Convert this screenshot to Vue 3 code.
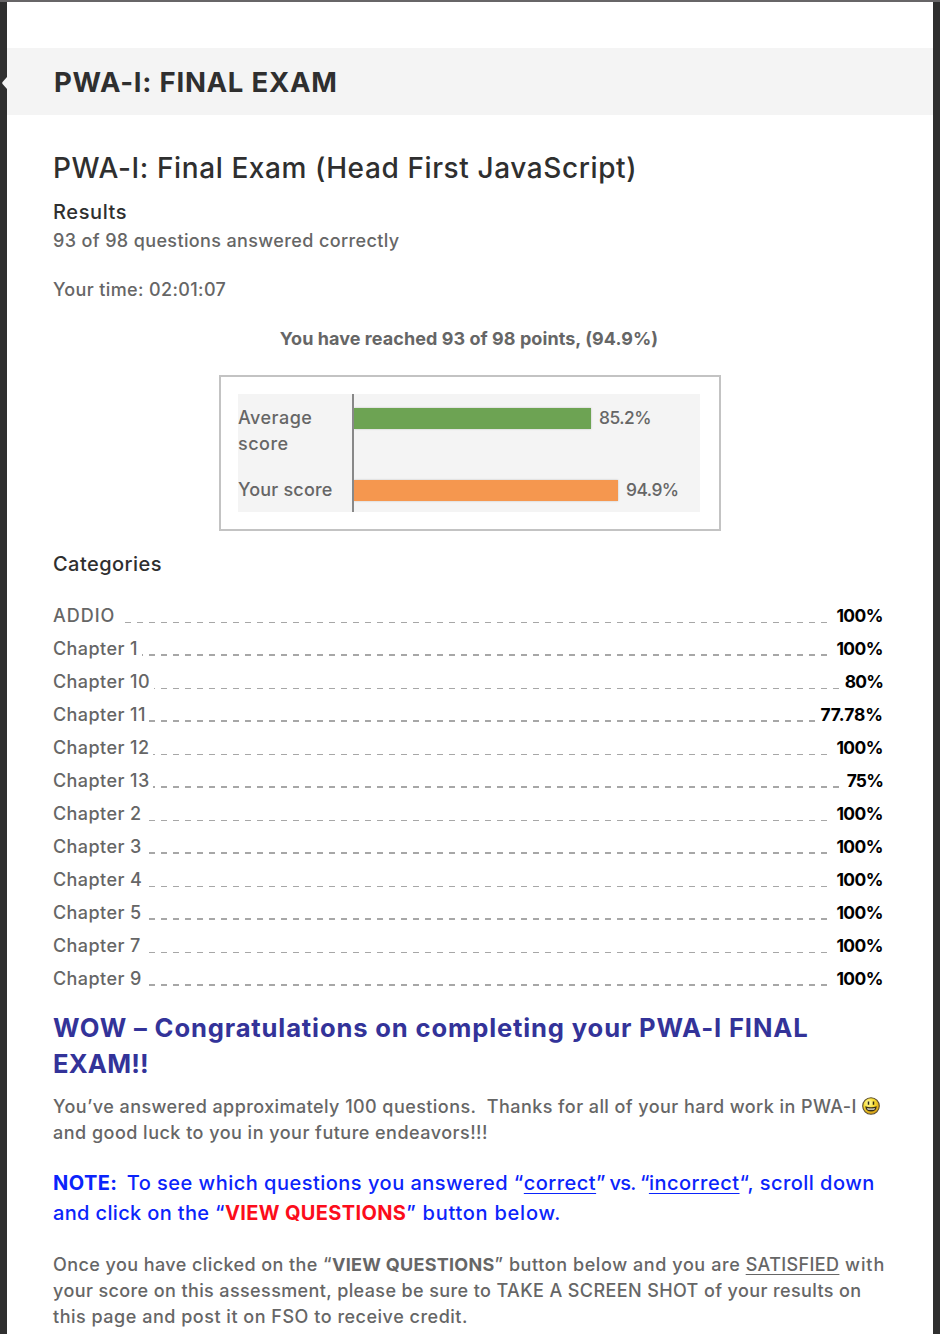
<script setup>
const scores = [
  { label: 'Average score', value: '85.2%', width: 237, kind: 'average' },
  { label: 'Your score', value: '94.9%', width: 264, kind: 'yours' },
]

const categories = [
  { name: 'ADDIO', score: '100%' },
  { name: 'Chapter 1', score: '100%' },
  { name: 'Chapter 10', score: '80%' },
  { name: 'Chapter 11', score: '77.78%' },
  { name: 'Chapter 12', score: '100%' },
  { name: 'Chapter 13', score: '75%' },
  { name: 'Chapter 2', score: '100%' },
  { name: 'Chapter 3', score: '100%' },
  { name: 'Chapter 4', score: '100%' },
  { name: 'Chapter 5', score: '100%' },
  { name: 'Chapter 7', score: '100%' },
  { name: 'Chapter 9', score: '100%' },
]
</script>

<template>
  <div class="page">
    <svg class="pointer" width="5" height="12" viewBox="0 0 5 12"><path d="M5 0L1 4.5Q-.6 6 1 7.5L5 12Z" fill="#f4f4f4" /></svg>
    <main class="sheet">
      <header class="banner"><h1>PWA-I: FINAL EXAM</h1></header>
      <div class="content">
        <h2>PWA-I: Final Exam (Head First JavaScript)</h2>
        <h3 class="results">Results</h3>
        <p class="answered">93 of 98 questions answered correctly</p>
        <p class="time">Your time: 02:01:07</p>
        <p class="reached">You have reached 93 of 98 points, (94.9%)</p>

        <section class="chart">
          <div class="plot">
            <div v-for="s in scores" :key="s.kind" class="score" :class="s.kind">
              <div class="score-label">{{ s.label }}</div>
              <div class="track">
                <div class="bar" :style="{ width: s.width + 'px' }"></div>
                <span class="score-value">{{ s.value }}</span>
              </div>
            </div>
          </div>
        </section>

        <h3 class="cat-title">Categories</h3>
        <ul class="categories">
          <li v-for="c in categories" :key="c.name">
            <span class="cat-name" :class="{ upper: c.name === 'ADDIO' }">{{ c.name }}</span>
            <span class="cat-score" :class="{ short: c.score.length === 3, long: c.score.length > 4 }">{{ c.score }}</span>
          </li>
        </ul>

        <h2 class="wow"><span class="line">WOW – Congratulations on completing your PWA-I FINAL</span><span class="line exam">EXAM!!</span></h2>

        <p class="thanks">
          <span class="line">You’ve answered approximately 100 questions.&nbsp; Thanks for all of your hard work in PWA-I
            <svg class="smiley" width="18" height="18" viewBox="0 0 18 18">
              <defs>
                <radialGradient id="face" cx=".38" cy=".32" r=".7">
                  <stop offset="0" stop-color="#fffbb0" />
                  <stop offset=".45" stop-color="#f8df35" />
                  <stop offset="1" stop-color="#d69a10" />
                </radialGradient>
              </defs>
              <circle cx="9" cy="9" r="8.3" fill="url(#face)" stroke="#5a4d30" stroke-width="1.1" />
              <path d="M6.5 4.4v3.4M11.5 4.4v3.4" stroke="#2b2510" stroke-width="1.5" />
              <path d="M3.2 9.2Q9 11.2 14.8 9.2Q14.2 14.6 9 14.6T3.2 9.2Z" fill="#3a3018" />
              <path d="M5 10.9Q9 11.9 13 10.9L12.2 12.7H5.8Z" fill="#e9e9e2" />
            </svg>
          </span>
          <span class="line luck">and good luck to you in your future endeavors!!!</span>
        </p>

        <p class="note">
          <span class="line"><b class="n-note">NOTE:</b><span class="n-a">&nbsp; To see which questions you answered “</span><u class="n-b">correct</u><span class="n-c">” vs. “</span><u class="n-d">incorrect</u><span class="n-e">“, scroll down</span></span>
          <span class="line"><span class="n-f">and click on the “</span><b class="view">VIEW QUESTIONS</b><span class="n-g">” button below.</span></span>
        </p>

        <p class="once">
          <span class="line"><span class="o-a">Once you have clicked on the “</span><b class="o-b">VIEW QUESTIONS</b><span class="o-c">” button below and you are </span><u class="o-d">SATISFIED</u><span class="o-e"> with</span></span>
          <span class="line o-f">your score on this assessment, please be sure to TAKE A SCREEN SHOT of your results on</span>
          <span class="line o-g">this page and post it on FSO to receive credit.</span>
        </p>
      </div>
    </main>
  </div>
</template>

<style>
body { background: #2f2f2f; overflow: hidden; }
</style>

<style scoped>
.page {
  position: relative;
  box-sizing: border-box;
  height: 1334px;
  overflow: hidden;
  padding: 0 7px;
  border-top: 2px solid #676567;
  background: #2f2f2f;
  font-family: Inter, "Liberation Sans", sans-serif;
  font-size: 18px;
  font-weight: 500;
  line-height: 26px;
  letter-spacing: 0.37px;
  color: #666;
}
.pointer { position: absolute; left: 2px; top: 75px; }
.sheet { height: 1332px; padding-top: 46px; box-sizing: border-box; background: #fff; }
.banner { height: 67px; padding: 1px 46px 0 47px; box-sizing: border-box; background: #f4f4f4; }
h1, h2, h3, p, ul { margin: 0; padding: 0; }
h1 { font-size: 27.5px; font-weight: 700; line-height: 67px; letter-spacing: 0.75px; color: #2f2f2f; }
.content { padding: 35px 50px 0 46px; white-space: nowrap; }
h2 { font-size: 28px; font-weight: 500; line-height: 36px; letter-spacing: 0.6px; color: #2f2f2f; }
h3 { font-size: 20px; font-weight: 500; line-height: 30px; letter-spacing: 0.6px; color: #2f2f2f; }
.results { margin-top: 11px; }
.answered { margin-top: 1px; }
.time { margin-top: 23px; }
.reached { width: 832px; margin-top: 23px; text-align: center; font-weight: 700; letter-spacing: 0.06px; }
.chart {
  box-sizing: border-box;
  width: 502px;
  height: 156px;
  margin: 23px 0 0 166px;
  padding: 17px;
  border: 2px solid #c3c3c3;
}
.plot { display: flex; flex-direction: column; width: 462px; height: 118px; background: #f4f4f4; }
.score { display: flex; }
.average { height: 72px; }
.yours { height: 46px; }
.score-label { width: 114px; padding-top: 11px; box-sizing: border-box; white-space: normal; letter-spacing: 0.2px; }
.average .score-label { padding-right: 30px; letter-spacing: 0.5px; }
.track { display: flex; align-items: flex-start; flex: 1; padding-top: 11px; border-left: 2px solid #888; }
.bar { height: 21px; margin-top: 3px; box-shadow: 0 0 2px rgba(0, 0, 0, 0.2); clip-path: inset(-2px -2px -2px 0); }
.average .bar { background: #6da353; }
.yours .bar { background: #f5974f; }
.score-value { margin-left: 8px; font-size: 17.4px; letter-spacing: -0.5px; }
.cat-title { margin-top: 18px; letter-spacing: 0.45px; }
.categories { margin-top: 20px; list-style: none; }
.categories li {
  display: flex;
  justify-content: space-between;
  width: 830px;
  height: 33px;
  line-height: 33px;
  background: repeating-linear-gradient(90deg, #a7a7a7 0 6px, transparent 6px 12px) 0 23px / 830px 1px no-repeat;
}
.categories li:nth-child(even) { background-size: 830px 2px; background-position: 0 22px; }
.cat-name { padding-right: 3.6px; background: #fff; letter-spacing: 0.42px; }
.upper { letter-spacing: 0.98px; }
.cat-score { padding-left: 5px; background: #fff; color: #000; font-size: 17.4px; font-weight: 700; letter-spacing: -0.5px; }
.short { letter-spacing: -0.8px; }
.long { letter-spacing: 0; }
.line { display: block; }
.wow { margin-top: 15px; font-size: 25.6px; font-weight: 700; letter-spacing: 0.85px; color: #333399; }
.exam { letter-spacing: 0.2px; }
.thanks { margin-top: 12px; }
.thanks .line { height: 26px; letter-spacing: 0.43px; }
.thanks .luck { letter-spacing: 0.48px; }
.smiley { vertical-align: -2px; }
.note { margin-top: 22px; font-size: 20px; line-height: 30px; letter-spacing: 0.46px; color: #0b24fb; }
u { text-decoration-thickness: 1px; text-underline-offset: 3px; text-decoration-skip-ink: none; }
b { font-weight: 700; }
.n-note { letter-spacing: 0.46px; }
.n-a { margin-left: -2.5px; letter-spacing: 0.49px; }
.n-c { letter-spacing: -0.7px; }
.n-d { letter-spacing: 0.5px; }
.n-f { letter-spacing: 0.35px; }
.view { letter-spacing: 0.36px; color: #fc0d1b; }
.n-g { letter-spacing: 0.75px; }
.once { margin-top: 24px; }
.o-a { letter-spacing: 0.42px; }
.o-b { letter-spacing: 0.27px; }
.o-c { letter-spacing: 0.58px; }
.o-e { letter-spacing: 0.9px; }
.o-f { letter-spacing: 0.39px; }
.o-g { letter-spacing: 0.51px; }
</style>
